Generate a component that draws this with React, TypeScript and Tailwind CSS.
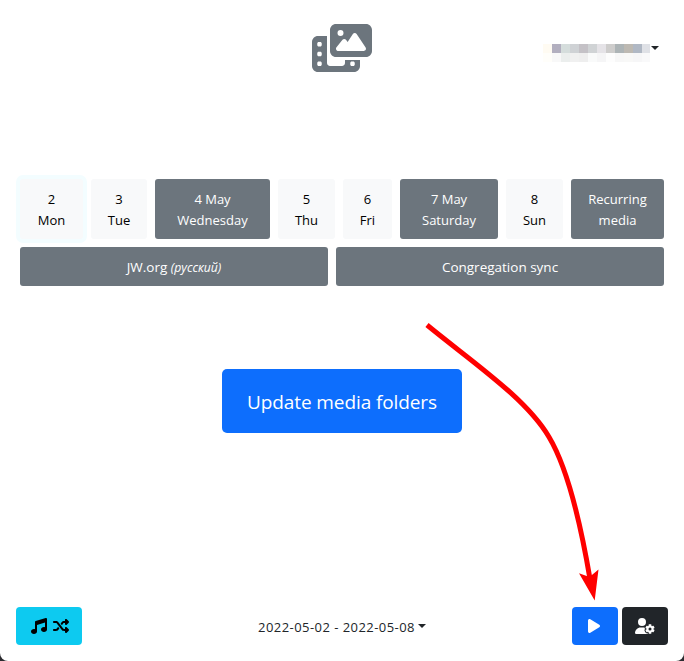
import type { ReactNode } from "react";
import { FaMusic, FaPhotoFilm, FaPlay, FaShuffle, FaUserGear } from "react-icons/fa6";

const accountTop = ["bg-[#fffbf2]", "bg-[#b2afbf]", "bg-[#d5dddc]", "bg-[#cfd2d5]", "bg-[#c4c1c6]", "bg-[#d0d3d5]", "bg-[#e5e3e7]", "bg-[#cecdcc]", "bg-[#adb4b6]", "bg-[#bdb9b2]", "bg-[#b0b8c4]", "bg-[#dfe1e6]"];
const accountBottom = ["bg-[#fffefa]", "bg-[#f8f8f8]", "bg-[#ebeeed]", "bg-[#f0f0f0]", "bg-[#eeeeee]", "bg-[#f9fafa]", "bg-[#f5f5f6]", "bg-[#fdfdfd]", "bg-[#f7f7f7]", "bg-[#f8f8f7]", "bg-[#f6f6f7]", "bg-[#f9f9fa]"];

const days = [
  { top: "2", bottom: "Mon", box: "w-[63px] bg-[#f8f9fa] text-black ring-4 ring-[#f3fdff]" },
  { top: "3", bottom: "Tue", box: "w-[56px] bg-[#f8f9fa] text-black" },
  { top: "4 May", bottom: "Wednesday", box: "w-[115px] bg-[#6c757d] text-white" },
  { top: "5", bottom: "Thu", box: "w-[57px] bg-[#f8f9fa] text-black" },
  { top: "6", bottom: "Fri", box: "w-[49px] bg-[#f8f9fa] text-black" },
  { top: "7 May", bottom: "Saturday", box: "w-[98px] bg-[#6c757d] text-white" },
  { top: "8", bottom: "Sun", box: "w-[57px] bg-[#f8f9fa] text-black" },
  { top: "Recurring", bottom: "media", box: "w-[93px] bg-[#6c757d] text-white" },
];

function Caret() {
  return <span className="inline-block border-x-4 border-t-4 border-x-transparent border-t-[#212529]" />;
}

function Tile({ className, children }: { className: string; children: ReactNode }) {
  return <button className={`rounded-[3px] pt-0.5 text-center whitespace-nowrap ${className}`}>{children}</button>;
}

function Header() {
  return (
    <header className="flex h-[179px] items-start pt-6">
      <div className="w-[312px]" />
      <FaPhotoFilm className="h-12 w-[60px] text-[#6c757d]" />
      <div className="mt-5 ml-[171px] flex items-start">
        <div>
          <div className="flex">{accountTop.map((c, i) => <i key={i} className={`h-[9px] ${i === 11 ? "w-2" : "w-[9px]"} ${c}`} />)}</div>
          <div className="flex">{accountBottom.map((c, i) => <i key={i} className={`h-[9px] ${i === 11 ? "w-2" : "w-[9px]"} ${c}`} />)}</div>
        </div>
        <span className="mt-0.5 ml-px flex"><Caret /></span>
      </div>
    </header>
  );
}

export default function App() {
  return (
    <div className="relative h-[661px] w-[684px] overflow-hidden bg-[#2b2b2f] font-['Open_Sans','Noto_Sans',sans-serif] text-[13px] leading-[21px] text-[#212529]">
      <div className="flex h-full flex-col rounded-b-[8px] bg-white">
        <Header />
        <main className="flex flex-col px-5">
          <div className="flex gap-2">
            {days.map((d) => (
              <Tile key={d.bottom} className={`h-[60px] ${d.box}`}>
                <span className="block">{d.top}</span>
                <span className="block">{d.bottom}</span>
              </Tile>
            ))}
          </div>
          <div className="mt-2 flex gap-2">
            <Tile className="h-[39px] w-[308px] bg-[#6c757d] text-[13.5px] text-white">
              JW.org <em className="text-[12.2px]">(русский)</em>
            </Tile>
            <Tile className="h-[39px] w-[328px] bg-[#6c757d] text-[13.5px] text-white">Congregation sync</Tile>
          </div>
          <button className="mt-[83px] h-16 w-60 self-center rounded-[5px] bg-[#0d6efd] pt-0.5 text-[19px] tracking-[-0.1px] text-white">Update media folders</button>
        </main>
        <footer className="mt-auto mb-4 grid grid-cols-3 items-center px-4">
          <button className="flex h-[38px] w-[66px] items-center justify-center gap-1.5 rounded-[4px] bg-[#0dcaf0] pl-0.5 text-black">
            <FaMusic className="size-4" />
            <FaShuffle className="size-4" />
          </button>
          <button className="flex items-center justify-center gap-[3px] whitespace-nowrap">
            <span className="pt-0.5 tracking-[0.45px]">2022-05-02 - 2022-05-08</span>
            <Caret />
          </button>
          <div className="flex justify-end gap-1">
            <button className="flex h-[38px] w-[46px] items-center justify-center rounded-[4px] bg-[#0d6efd] text-white"><FaPlay className="mr-px h-4 w-3" /></button>
            <button className="flex h-[38px] w-[46px] items-center justify-center rounded-[4px] bg-[#212529] text-white"><FaUserGear className="h-4 w-5" /></button>
          </div>
        </footer>
      </div>
      <svg className="pointer-events-none absolute inset-0" width="684" height="661" viewBox="0 0 684 661">
        <path d="M427 325C472 362 526 398 549 437C567 467 580 520 590 579" fill="none" stroke="#f00" strokeWidth="5" />
        <path d="M594.7 600.5L579 573.3L589.5 577L598.5 569.5Z" fill="#f00" />
      </svg>
    </div>
  );
}
